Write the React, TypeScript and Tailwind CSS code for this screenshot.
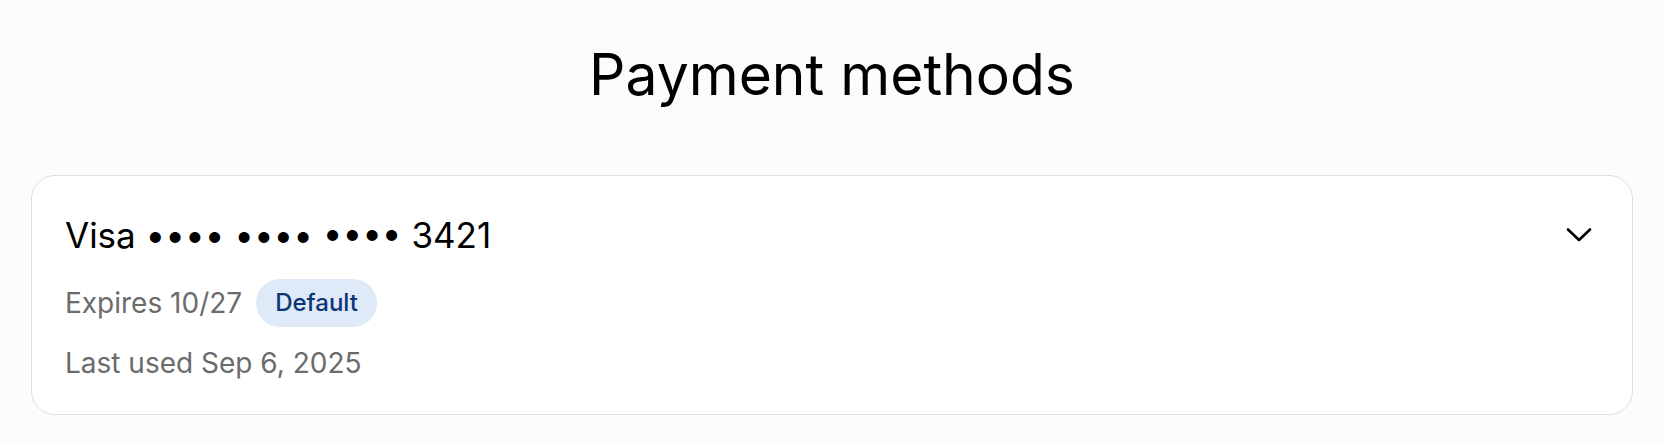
import React from 'react';

function ChevronDown() {
  return (
    <svg width="26" height="16" viewBox="0 0 26 16" fill="none" className="shrink-0">
      <path d="M2 2.5 L13 13 L24 2.5" stroke="#000" strokeWidth="2.6" strokeLinecap="round" strokeLinejoin="round" />
    </svg>
  );
}

export default function App() {
  return (
    <div className="min-h-screen bg-[#fbfdfd] px-[31px] pt-[40px] font-['Inter',sans-serif] text-black">
      {/* Page title */}
      <h1 className="text-center text-[57px] leading-[69px] font-normal">Payment methods</h1>

      {/* Card */}
      <div className="mt-[66px] rounded-[24px] border border-[#dedede] bg-white pl-[33px] pr-[40px] pt-[38px] pb-[34px]">
        <div className="flex items-center justify-between">
          <span className="text-[35px] leading-[42px]">Visa •••• •••• •••• 3421</span>
          <ChevronDown />
        </div>

        <div className="mt-[23px] flex items-center gap-[14px]">
          <span className="text-[28px] leading-[34px] text-[#6b6b6b]">Expires 10/27</span>
          <span className="flex h-[48px] items-center rounded-full bg-[#dfeaf8] px-[19px] text-[24px] font-medium text-[#0b3577]">
            Default
          </span>
        </div>

        <div className="mt-[19px] text-[28px] leading-[34px] text-[#6b6b6b]">Last used Sep 6, 2025</div>
      </div>
    </div>
  );
}
